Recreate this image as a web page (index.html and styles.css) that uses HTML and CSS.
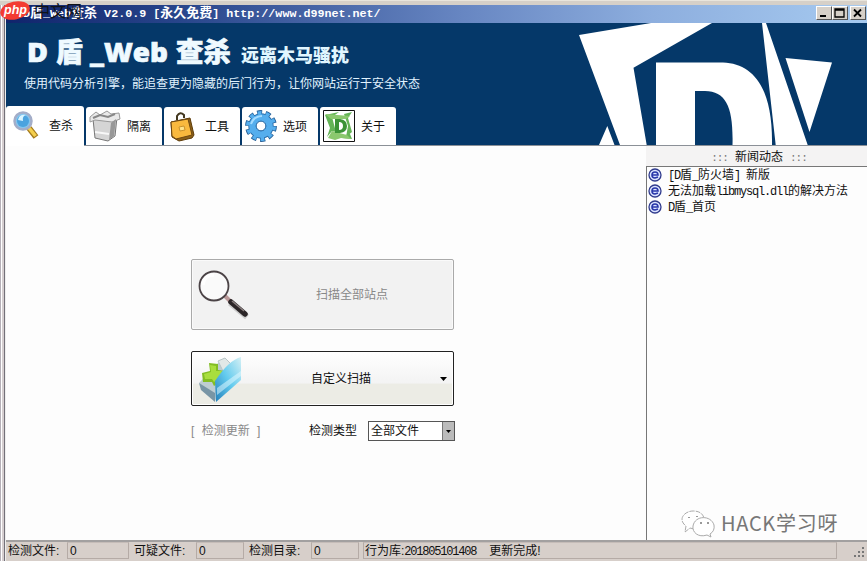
FILE: index.html
```html
<!DOCTYPE html>
<html lang="zh-CN">
<head>
<meta charset="utf-8">
<title>D盾_Web查杀</title>
<link rel="stylesheet" href="styles.css">
</head>
<body>
<div class="window">
  <div class="titlebar">
    <div class="caption"><span class="mono">D</span>盾<span class="mono">_Web</span>查杀<span class="mono"> V2.0.9 [</span>永久免费<span class="mono">] http://www.d99net.net/</span></div>
    <div class="controls">
      <button class="ctl"><svg width="14" height="12"><path d="M3 9h6" stroke="#000" stroke-width="2"/></svg></button>
      <button class="ctl"><svg width="14" height="12"><path d="M2 2h9v8H2zM2 3h9" fill="none" stroke="#000" stroke-width="1.300"/></svg></button>
      <button class="ctl last"><svg width="14" height="12"><path d="M3 2.500l7 7M10 2.500l-7 7" stroke="#000" stroke-width="1.800"/></svg></button>
    </div>
  </div>
  <header class="banner">
    <div class="brand">
      <div class="names">
        <svg class="logo" width="235" height="50"><g fill="#effaff" stroke="#effaff" stroke-width=".7" font-weight="800"><text x="21" y="39" font-size="27" textLength="21" lengthAdjust="spacingAndGlyphs">D</text><text x="50" y="39" font-size="27" textLength="27" lengthAdjust="spacingAndGlyphs">盾</text><text x="84" y="39" font-size="27" textLength="78" lengthAdjust="spacingAndGlyphs">_Web</text><text x="170" y="39" font-size="27" textLength="55" lengthAdjust="spacingAndGlyphs">查杀</text></g></svg>
        <span class="motto">远离木马骚扰</span>
      </div>
      <p class="desc">使用代码分析引擎，能追查更为隐藏的后门行为，让你网站运行于安全状态</p>
      <nav class="tabs">
        <div class="tab active">
          <svg width="30" height="30" viewBox="0 0 30 30"><path d="M17 18l7 9" stroke="#a47a1c" stroke-width="6"/><path d="M17 18l6.500 8" stroke="#f4cf4d" stroke-width="3.500"/><circle cx="11" cy="11" r="8.500" fill="#84c5ee" stroke="#a3adc8" stroke-width="2.500"/><circle cx="11" cy="11" r="6" fill="#4ba3df"/><path d="M6 10q1-6 8-5q-4 1-3 6z" fill="#d9f4ff"/></svg>
          <span>查杀</span>
        </div>
        <div class="tab">
          <svg width="32" height="32" viewBox="0 0 32 32"><path d="M4 9l19 1 5-3-2 19-7 5-13-3z" fill="#d5d5d5" stroke="#777"/><path d="M1 7l6-5 4 3 7-4 4 3 8-1 1 6-8 3-17-2-5 2z" fill="#e9e9e9" stroke="#999"/><path d="M4 8l7-3 8 2 7-3" fill="none" stroke="#888" stroke-width="2"/><path d="M22 13l5-4-2 17-5 4z" fill="#989898"/><path d="M6 22l14 2" stroke="#f8f8f8" stroke-width="2"/></svg>
          <span>隔离</span>
        </div>
        <div class="tab">
          <svg width="32" height="32" viewBox="0 0 32 32"><path d="M10 10V6q3-5 7-1v3" fill="none" stroke="#433820" stroke-width="2"/><path d="M4 12l19-4 4 17-2 3-13 3-7-4z" fill="#8b6018" stroke="#5d3b09"/><path d="M4 12l17-3 4 16-16 4-4-3z" fill="#f9b93e" stroke="#6d4711"/><path d="M12 17l5-1 1 4-5 1z" fill="#ffe38b" stroke="#c8912b"/></svg>
          <span>工具</span>
        </div>
        <div class="tab">
          <svg width="34" height="32" viewBox="0 0 34 32"><g fill="none"><circle cx="17" cy="16" r="13.500" stroke="#245e96" stroke-width="4.800" stroke-dasharray="5 3.480"/><circle cx="17" cy="16" r="8.700" stroke="#286ca9" stroke-width="8"/><circle cx="17" cy="16" r="12.800" stroke="#55aeed" stroke-width="4.400" stroke-dasharray="3.600 4.442" stroke-dashoffset="-.5"/><circle cx="17" cy="16" r="8.500" stroke="#55aeed" stroke-width="6.500"/><path d="M7 14q3-8 11-8" stroke="#a5dcff" stroke-width="2"/></g><circle cx="17" cy="16" r="4.800" fill="#fff" stroke="#286ca9"/></svg>
          <span>选项</span>
        </div>
        <div class="tab about">
          <svg width="32" height="32" viewBox="0 0 32 32"><path d="M.5.500h31v31H.500z" fill="#fff" stroke="#111"/><path d="M2 5l14-3-7 5 4 15-4-1-5 6 3-9zM12 27l15-3 2 5-10-1zM21 4l8-2-4 6 4 14-6 5 2-11z" fill="#64b456"/><path d="M2 4l25 2-4 3H8zM5 28l4-7 15 4 4 4-10-1-6 2z" fill="#8bc86e"/><path d="M12 9h5q7 1 7 7t-7 7h-5zM16 12v8q4 0 4-4t-4-4z" fill="#3b9336" fill-rule="evenodd"/></svg>
          <span>关于</span>
        </div>
      </nav>
    </div>
    <svg class="art" width="297" height="122" viewBox="570 23 297 122"><g fill="#fff"><path d="M579 35L651 23H712L633.500 67.700 646.700 145H620zM607.300 126L599 145h15.500zM762 23h4l41.700 122h-32zM785.500 58L832 62.500 809.500 132z"/><path fill-rule="evenodd" d="M656 62.500h67c32 1 50 28 49 83h-39.500c1-38-6-54-27.500-54.500h-10v54.500h-39z"/></g></svg>
  </header>
  <div class="content">
    <main class="scan">
      <div class="panel">
        <button class="big disabled">
          <svg class="glass" width="56" height="56" viewBox="0 0 56 56"><path d="M34 36l17 14" stroke="#ccc" stroke-width="6"/><path d="M29 29l7 7" stroke="#b99" stroke-width="4"/><path d="M35 35l14 12" stroke="#2b2527" stroke-width="5.500" stroke-linecap="round"/><path d="M36 34l12 10" stroke="#8b8080" stroke-width="1.500"/><circle cx="18" cy="19" r="14.500" fill="#fafafa" stroke="#4b4346" stroke-width="1.800"/><path d="M7 18q1-10 11-10" stroke="#fff" stroke-width="3" fill="none"/></svg>
          <span>扫描全部站点</span>
        </button>
        <button class="big custom">
          <svg class="folder" width="48" height="50" viewBox="0 0 48 50"><defs><linearGradient id="fold" x1="0" y1="1" x2="1" y2="0"><stop stop-color="#237eb9"/><stop offset=".5" stop-color="#63cbee"/><stop offset="1" stop-color="#d5f0f5"/></linearGradient></defs><path d="M1 29l21-22 10 2 9 17-24 20z" fill="#becdd2"/><path d="M1 29l16 10v9L3 36z" fill="#7895a5"/><path d="M20 7l7-3 6 6-7 9z" fill="#e1e8e7" stroke="#b8c5c7"/><path d="M11 9l9 1v6l7 1-3 9-8 6-2-4H5l-1-9 8-2z" fill="#83bd24"/><path d="M12 11l6 1v5h6l-3 7-5 4-2-3H7l-1-5 7-2z" fill="#a9de3e"/><path d="M17 27Q31 6 43 3v23L18 48z" fill="url(#fold)"/><path d="M19 34L43 17v5L19 41z" fill="#dff8ff" opacity=".55"/></svg>
          <span>自定义扫描</span>
          <svg class="arrow" width="7" height="4"><path d="M0 0h7L3.500 4z"/></svg>
        </button>
        <div class="options">
          <span class="update">[ 检测更新 ]</span>
          <label>检测类型</label>
          <div class="select"><span>全部文件</span><i><svg width="5" height="3"><path d="M0 0h5L2.500 3z"/></svg></i></div>
        </div>
      </div>
    </main>
    <aside class="news">
      <h2><em>:::</em>新闻动态<em>:::</em></h2>
      <ul>
        <li><svg width="14" height="14"><circle cx="7" cy="7" r="6" fill="#dce4ff" stroke="#303b8d" stroke-width="1.300"/><path d="M4 7h6q0-3-3-3T4 7t3 3l3-1" fill="none" stroke="#2937aa" stroke-width="1.600"/></svg><span><b>[D</b>盾<b>_</b>防火墙<b>] </b>新版</span></li>
        <li><svg width="14" height="14"><circle cx="7" cy="7" r="6" fill="#dce4ff" stroke="#303b8d" stroke-width="1.300"/><path d="M4 7h6q0-3-3-3T4 7t3 3l3-1" fill="none" stroke="#2937aa" stroke-width="1.600"/></svg><span>无法加载<b>libmysql.dll</b>的解决方法</span></li>
        <li><svg width="14" height="14"><circle cx="7" cy="7" r="6" fill="#dce4ff" stroke="#303b8d" stroke-width="1.300"/><path d="M4 7h6q0-3-3-3T4 7t3 3l3-1" fill="none" stroke="#2937aa" stroke-width="1.600"/></svg><span><b>D</b>盾<b>_</b>首页</span></li>
      </ul>
      <div class="mark">
        <svg width="36" height="28" viewBox="0 0 36 28"><g fill="#fff" stroke="#aaa"><path d="M14 19l-4-1-5 4 1-6C-3 9 5 1 13 1q9 0 11 7" stroke-dasharray="5 1"/><path d="M30 24l1 3-4-2C18 28 12 22 13 16c2-11 18-11 21-1q1 6-4 9z"/></g><path d="M9 7v1M17 6v1M20 13h2M27 13h2" stroke="#999" stroke-width="2"/></svg>
        <span>HACK学习呀</span>
      </div>
    </aside>
  </div>
  <footer class="status">
    <span class="cell c1">检测文件:</span><span class="cell box c2">0</span>
    <span class="cell c3">可疑文件:</span><span class="cell box c4">0</span>
    <span class="cell c5">检测目录:</span><span class="cell box c6">0</span>
    <span class="cell box c7">行为库:<b>201805101408</b><span class="done">更新完成!</span></span>
    <svg class="grip" width="14" height="14"><path d="M9 3h2M9 7h2M5 7h2M9 11h2M5 11h2M1 11h2" stroke="#777" stroke-width="2"/></svg>
  </footer>
</div>
<div class="stamp">
  <svg width="32" height="22" viewBox="0 0 32 22"><ellipse cx="15" cy="10.500" rx="15" ry="9" transform="rotate(-12 15 10.500)" fill="#f33b32"/><text x="4" y="14" textLength="23" lengthAdjust="spacingAndGlyphs">php</text></svg>
  <span>中文网</span>
</div>
</body>
</html>
```

FILE: styles.css
```css
* { box-sizing: border-box; }
body { margin: 0; overflow: hidden; font: 12px/16px "Liberation Sans", "Noto Sans CJK SC", sans-serif; color: #111; }
button { padding: 0; font: inherit; }
svg { display: block; flex: none; }
b { font: 12px/14px "Liberation Mono", monospace; letter-spacing: -1.2px; white-space: pre; }
.window { width: 867px; height: 561px; display: flex; flex-direction: column; padding: 4px 0 0 6px; background: linear-gradient(90deg, #b6b0b8 0 1px, #fff 1px 2px, #d5ced0 2px 4px, #737078 4px 5px, #eee 5px); border-top: 1px solid #e9e5dc; box-shadow: inset 0 4px #d6d0c8; }
.titlebar { height: 18px; display: flex; justify-content: space-between; background: linear-gradient(90deg, #10246c, #28458b 20%, #6786c2 53%, #8daede 75%, #a6caf0); }
.caption { padding-left: 17px; font-size: 13px; line-height: 16px; font-weight: 700; color: #fff; white-space: pre; }
.mono { font: bold 11.7px/16px "Liberation Mono", monospace; }
.controls { display: flex; padding: 1px 0 0; width: 51px; }
.ctl { width: 16px; height: 14px; background: #d6d0c8; border: 1px solid; border-color: #fff #555 #555 #fff; }
.last { margin-left: 2px; }
.banner { height: 123px; background: #053869; display: flex; border-bottom: 1px solid #8b9097; }
.brand { width: 564px; flex: none; }
.names { display: flex; height: 46px; }
.logo { font-family: "Open Sans", "Noto Sans CJK SC", sans-serif; }
.motto { font: 900 18px/62px "Noto Sans CJK SC", sans-serif; color: #e1f6ff; height: 46px; }
.desc { margin: 5px 0 0 18px; height: 32px; font-size: 12px; line-height: 20px; color: #e1f3ff; white-space: nowrap; }
.tabs { display: flex; align-items: flex-start; height: 40px; gap: 2px; }
.tab { display: flex; align-items: center; width: 76px; height: 38px; margin-top: 1px; background: #fff; border-radius: 3px 3px 0 0; padding-left: 3px; gap: 6px; }
.tab span { padding-top: 1px; }
.tab.active { width: 78px; height: 40px; margin-top: 0; padding: 0 0 2px 6px; gap: 7px; }
.tab:nth-child(4) { padding-left: 2px; gap: 5px; }
.content { height: 394px; display: flex; background: #fdfdfd; }
.scan { width: 640px; padding: 113px 0 0 185px; }
.panel { width: 264px; display: flex; flex-direction: column; }
.big { display: flex; align-items: center; width: 263px; border-radius: 2px; color: #111; }
.disabled { height: 71px; border: 1px solid #aaa; background: #f2f2f2; color: #888; box-shadow: inset 0 0 0 1px #fafafa; }
.glass { margin-left: 4px; }
.disabled span { margin-left: 64px; }
.custom { margin-top: 21px; height: 55px; border: 1px solid #222; background: linear-gradient(#fff 0, #f3f3f3 59%, #ecece5 60%); box-shadow: inset 0 0 0 1px #fff; }
.folder { margin-left: 6px; }
.custom span { margin-left: 65px; }
.arrow { margin-left: 69px; }
.options { display: flex; margin-top: 15px; align-items: center; height: 20px; }
.update { width: 118px; color: #888; word-spacing: 4px; }
.options label { width: 59px; }
.select { width: 87px; height: 20px; border: 1px solid #555; display: flex; justify-content: space-between; line-height: 18px; padding-left: 2px; background: #fff; }
.select i { width: 12px; background: #bbb; border-left: 1px solid #777; display: grid; place-items: center; }
.news { flex: 1; display: flex; flex-direction: column; }
.news h2 { height: 20px; margin: 0; background: #f4f3f3; font: 12px/20px "Noto Sans CJK SC", sans-serif; text-align: center; padding-left: 5px; }
.news em { font: 11px "Liberation Mono", monospace; color: #777; margin: 0 7px; letter-spacing: -1px; }
.news ul { list-style: none; margin: 0; padding: 0 0 0 1px; flex: 1; border: solid #777; border-width: 1px 0 0 1px; }
.news li { display: flex; align-items: center; height: 16px; gap: 6px; white-space: nowrap; }
.mark { height: 53px; display: flex; align-items: flex-start; margin-top: -53px; padding: 23px 0 0 34px; gap: 5px; color: #777; font: 20px "Noto Sans CJK SC", sans-serif; white-space: nowrap; }
.mark span { line-height: 26px; letter-spacing: .7px; }
.status { height: 21px; display: flex; align-items: stretch; background: #d7cfca; border-top: 2px solid #a2a0a0; }
.cell { flex: none; line-height: 18px; white-space: nowrap; }
.box { border: 1px solid #b5aba6; border-top-color: #c5bcb8; padding-left: 2px; line-height: 16px; height: 17px; }
.c1 { width: 61px; padding-left: 2px; }
.c2 { width: 62px; }
.c3 { width: 67px; padding-left: 5px; }
.c4 { width: 48px; }
.c5 { width: 67px; padding-left: 5px; }
.c6 { width: 48px; }
.c7 { width: 474px; margin-left: 4px; padding-left: 1px; }
.done { margin-left: 13px; }
.grip { margin: 3px 0 0 16px; }
.stamp { position: absolute; left: 0; top: 0; display: flex; }
.stamp text { font: italic 700 13px "Liberation Sans", sans-serif; fill: #fff; }
.stamp span { font: 16px/20px "Noto Sans CJK SC", sans-serif; color: #101318; margin-left: 2px; }
```
